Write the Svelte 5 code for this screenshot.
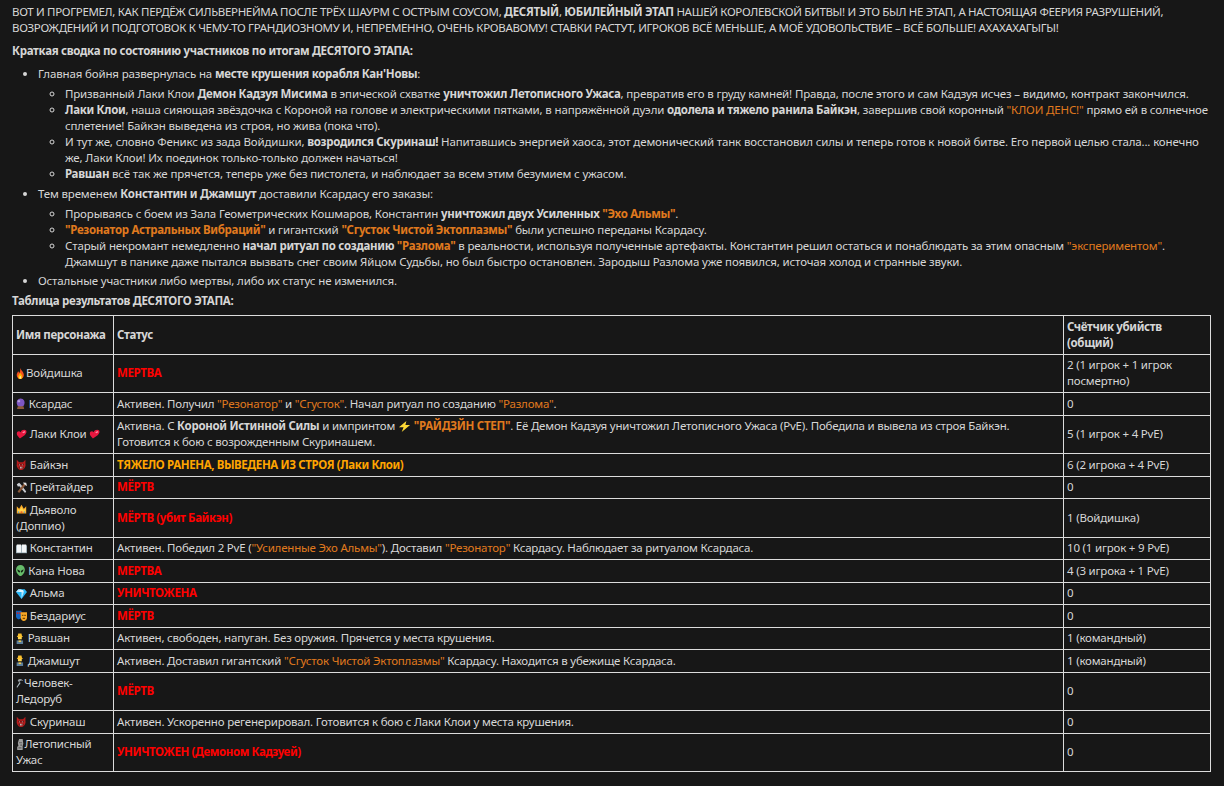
<script>
  // small hand-drawn emoji, same slots as the original text
  const paths = {
    fire: [['#f4511e', 'M6 0C7 3 11 5 11 9C11 12 9 14 6 14C3 14 1 12 1 9C1 7 2 6 3 4C4 5 4 6 5 6C6 4 6 2 6 0Z'], ['#ffb300', 'M6 6C7 8 9 9 9 11C9 13 8 14 6 14C4 14 3 13 3 11C3 9 5 8 6 6Z'], ['#ffe9a8', 'M6 10C7 11 7.500 12 7 13C6.500 14 5.500 14 5 13C4.500 12 5 11 6 10Z']],
    ball: [['#7e57c2', 'M6.500 0.500A5.500 5.500 0 1 1 6.499 0.500Z'], ['#b39ddb', 'M4 2.500A2 1.500 0 1 1 3.999 2.500Z'], ['#8d5a3a', 'M2.500 10.500H10.500L11.500 14H1.500Z']],
    heart: [['#e8173f', 'M1 6C1 3 4 2 6 4C7 1 11 0 13 2C14 4 13 6 11 8L5 12C3 10 1 8 1 6Z'], ['#ff8aa5', 'M8 4L11 2.500L12 4L9 5.500Z']],
    ogre: [['#b71c1c', 'M1 1L4 4H9L12 1L12 6C13 10 10 14 6.500 14C3 14 0 10 1 6Z'], ['#5d1010', 'M3 6H6V8H3ZM7 6H10V8H7ZM3.500 10H9.500V12H3.500Z'], ['#f5f5f5', 'M4 7H5V8H4ZM8 7H9V8H8ZM5 10H6V12H5ZM7 10H8V12H7Z']],
    tools: [['#c9ccd1', 'M1 3L4 1L6 3L13 12L11.500 14L4 5L2.500 6Z'], ['#8d5a3a', 'M11 1L13 3L4 14L2 12Z'], ['#e6e6e6', 'M9 0.500L13 1L14 5L12 4L10 2.500Z']],
    crown: [['#f9a825', 'M1 3L4 6L7 1L10 6L13 3V12H1Z'], ['#ffd54f', 'M2 5L4 8L7 4L10 8L12 5V10H2Z'], ['#e53935', 'M6 9.500H8V11H6Z'], ['#42a5f5', 'M2.500 9.500H4V11H2.500ZM10 9.500H11.500V11H10Z']],
    book: [['#90a4ae', 'M0 3H14V13H0Z'], ['#f5f7f8', 'M1 2H6.500V12H1ZM7.500 2H13V12H7.500Z']],
    alien: [['#66bb6a', 'M6.500 0C10 0 13 2.500 13 6C13 9.500 9 14 6.500 14C4 14 0 9.500 0 6C0 2.500 3 0 6.500 0Z'], ['#102010', 'M2 5.500L6 7.500L5.500 9.500C3.500 9.500 2 8 2 5.500ZM11 5.500L7 7.500L7.500 9.500C9.500 9.500 11 8 11 5.500Z']],
    gem: [['#29b6f6', 'M3 1.500H11L14 5L7 14L0 5Z'], ['#b3e5fc', 'M3 1.500H7V5H0ZM7 5H10L7 14Z'], ['#e1f5fe', 'M5 2.500H9L10 5H4Z']],
    masks: [['#1565c0', 'M0 1H7V8C7 10 5 12 3.500 12C2 12 0 10 0 8Z'], ['#c62828', 'M1 3H3V5H1ZM4 3H6V5H4Z'], ['#f9a825', 'M6 3H14V10C14 12.500 12 14 10 14C8 14 6 12.500 6 10Z'], ['#7a4a00', 'M7.500 6H9.500V7.500H7.500ZM10.500 6H12.500V7.500H10.500ZM8.500 10H11.500V11.500H8.500Z']],
    man: [['#fbc02d', 'M3.500 0.500H8.500L9.500 4H10.500V5H1.500V4H2.500Z'], ['#ffd54f', 'M3 5H9V8H3Z'], ['#5c7f9c', 'M1 9.500H11V14H1Z'], ['#f2c94c', 'M4 9.500H8V11.500H4Z']],
    pick: [['#9aa0a6', 'M3 3C6 0.500 10 1 13 4C10 3 8 3 6.500 4.500L5 5.500C4.500 4.500 3.500 4 3 3Z'], ['#b0bec5', 'M6.500 5L8 6.500L2 12.500L1 11.500Z']],
    moai: [['#9e9e9e', 'M5 0H11L12 6L11 9V14H2V10L4 9L3 5Z'], ['#5f5f5f', 'M5 4H10V5.500H5ZM7 7H10V8.500H7ZM4 10.500H9V12H4Z']],
    bolt: [['#fdd835', 'M9 0L1 8H6L4 14L13 5H8Z']]
  }

  // advance of each glyph in the source font
  const widths = { fire: 10, ball: 10, heart: 11, ogre: 11, tools: 11, crown: 11, book: 11, alien: 9.5, gem: 11, masks: 11, man: 9, pick: 8, moai: 8.5, bolt: 13 }
</script>

{#snippet em(name)}
  <svg class="em" viewBox="0 0 14 14" preserveAspectRatio="none" style="width: {widths[name]}px" aria-hidden="true">
    {#each paths[name] as [fill, d]}
      <path {fill} {d} />
    {/each}
  </svg>
{/snippet}

<main class="page">
  <p class="shout">ВОТ И ПРОГРЕМЕЛ, КАК ПЕРДЁЖ СИЛЬВЕРНЕЙМА ПОСЛЕ ТРЁХ ШАУРМ С ОСТРЫМ СОУСОМ, <b>ДЕСЯТЫЙ</b>, <b>ЮБИЛЕЙНЫЙ ЭТАП</b> НАШЕЙ КОРОЛЕВСКОЙ БИТВЫ! И ЭТО БЫЛ НЕ ЭТАП, А НАСТОЯЩАЯ ФЕЕРИЯ РАЗРУШЕНИЙ, ВОЗРОЖДЕНИЙ И ПОДГОТОВОК К ЧЕМУ-ТО ГРАНДИОЗНОМУ И, НЕПРЕМЕННО, ОЧЕНЬ КРОВАВОМУ! СТАВКИ РАСТУТ, ИГРОКОВ ВСЁ МЕНЬШЕ, А МОЁ УДОВОЛЬСТВИЕ – ВСЁ БОЛЬШЕ! АХАХАХАГЫГЫ!</p>

  <p><b>Краткая сводка по состоянию участников по итогам ДЕСЯТОГО ЭТАПА:</b></p>

  <ul class="outer">
    <li>
      <span class="lead">Главная бойня развернулась на <b>месте крушения корабля Кан'Новы</b>:</span>
      <ul class="inner">
        <li>Призванный Лаки Клои <b>Демон Кадзуя Мисима</b> в эпической схватке <b>уничтожил Летописного Ужаса</b>, превратив его в груду камней! Правда, после этого и сам Кадзуя исчез – видимо, контракт закончился.</li>
        <li><b>Лаки Клои</b>, наша сияющая звёздочка с Короной на голове и электрическими пятками, в напряжённой дуэли <b>одолела и тяжело ранила Байкэн</b>, завершив свой коронный <span class="q">"КЛОИ ДЕНС!"</span> прямо ей в солнечное сплетение! Байкэн выведена из строя, но жива (пока что).</li>
        <li>И тут же, словно Феникс из зада Войдишки, <b>возродился Скуринаш!</b> Напитавшись энергией хаоса, этот демонический танк восстановил силы и теперь готов к новой битве. Его первой целью стала... конечно же, Лаки Клои! Их поединок только-только должен начаться!</li>
        <li><b>Равшан</b> всё так же прячется, теперь уже без пистолета, и наблюдает за всем этим безумием с ужасом.</li>
      </ul>
    </li>
    <li>
      <span class="lead">Тем временем <b>Константин и Джамшут</b> доставили Ксардасу его заказы:</span>
      <ul class="inner">
        <li>Прорываясь с боем из Зала Геометрических Кошмаров, Константин <b>уничтожил двух Усиленных <span class="q">"Эхо Альмы"</span></b>.</li>
        <li><b><span class="q">"Резонатор Астральных Вибраций"</span></b> и гигантский <b><span class="q">"Сгусток Чистой Эктоплазмы"</span></b> были успешно переданы Ксардасу.</li>
        <li>Старый некромант немедленно <b>начал ритуал по созданию <span class="q">"Разлома"</span></b> в реальности, используя полученные артефакты. Константин решил остаться и понаблюдать за этим опасным <span class="q">"экспериментом"</span>. Джамшут в панике даже пытался вызвать снег своим Яйцом Судьбы, но был быстро остановлен. Зародыш Разлома уже появился, источая холод и странные звуки.</li>
      </ul>
    </li>
    <li>Остальные участники либо мертвы, либо их статус не изменился.</li>
  </ul>

  <p class="caption"><b>Таблица результатов ДЕСЯТОГО ЭТАПА:</b></p>

  <table>
    <thead>
      <tr>
        <th class="c-name">Имя персонажа</th>
        <th>Статус</th>
        <th class="c-kills">Счётчик убийств (общий)</th>
      </tr>
    </thead>
    <tbody>
      <tr>
        <td>{@render em('fire')}Войдишка</td>
        <td><b class="dead">МЕРТВА</b></td>
        <td>2 (1 игрок + 1 игрок посмертно)</td>
      </tr>
      <tr>
        <td>{@render em('ball')} Ксардас</td>
        <td>Активен. Получил <span class="q">"Резонатор"</span> и <span class="q">"Сгусток"</span>. Начал ритуал по созданию <span class="q">"Разлома"</span>.</td>
        <td>0</td>
      </tr>
      <tr>
        <td>{@render em('heart')} Лаки Клои {@render em('heart')}</td>
        <td>Активна. С <b>Короной Истинной Силы</b> и импринтом {@render em('bolt')} <b class="q">"РАЙДЗЙН СТЕП"</b>. Её Демон Кадзуя уничтожил Летописного Ужаса (PvE). Победила и вывела из строя Байкэн. Готовится к бою с возрожденным Скуринашем.</td>
        <td>5 (1 игрок + 4 PvE)</td>
      </tr>
      <tr>
        <td>{@render em('ogre')} Байкэн</td>
        <td><b class="hurt">ТЯЖЕЛО РАНЕНА, ВЫВЕДЕНА ИЗ СТРОЯ (Лаки Клои)</b></td>
        <td>6 (2 игрока + 4 PvE)</td>
      </tr>
      <tr>
        <td>{@render em('tools')} Грейтайдер</td>
        <td><b class="dead">МЁРТВ</b></td>
        <td>0</td>
      </tr>
      <tr>
        <td>{@render em('crown')} Дьяволо (Доппио)</td>
        <td><b class="dead">МЁРТВ (убит Байкэн)</b></td>
        <td>1 (Войдишка)</td>
      </tr>
      <tr>
        <td>{@render em('book')} Константин</td>
        <td>Активен. Победил 2 PvE (<span class="q">"Усиленные Эхо Альмы"</span>). Доставил <span class="q">"Резонатор"</span> Ксардасу. Наблюдает за ритуалом Ксардаса.</td>
        <td>10 (1 игрок + 9 PvE)</td>
      </tr>
      <tr>
        <td>{@render em('alien')} Кана Нова</td>
        <td><b class="dead">МЕРТВА</b></td>
        <td>4 (3 игрока + 1 PvE)</td>
      </tr>
      <tr>
        <td>{@render em('gem')} Альма</td>
        <td><b class="dead">УНИЧТОЖЕНА</b></td>
        <td>0</td>
      </tr>
      <tr>
        <td>{@render em('masks')} Бездариус</td>
        <td><b class="dead">МЁРТВ</b></td>
        <td>0</td>
      </tr>
      <tr>
        <td>{@render em('man')} Равшан</td>
        <td>Активен, свободен, напуган. Без оружия. Прячется у места крушения.</td>
        <td>1 (командный)</td>
      </tr>
      <tr>
        <td>{@render em('man')} Джамшут</td>
        <td>Активен. Доставил гигантский <span class="q">"Сгусток Чистой Эктоплазмы"</span> Ксардасу. Находится в убежище Ксардаса.</td>
        <td>1 (командный)</td>
      </tr>
      <tr>
        <td>{@render em('pick')}Человек-Ледоруб</td>
        <td><b class="dead">МЁРТВ</b></td>
        <td>0</td>
      </tr>
      <tr>
        <td>{@render em('ogre')} Скуринаш</td>
        <td>Активен. Ускоренно регенерировал. Готовится к бою с Лаки Клои у места крушения.</td>
        <td>0</td>
      </tr>
      <tr>
        <td>{@render em('moai')}Летописный Ужас</td>
        <td><b class="dead">УНИЧТОЖЕН (Демоном Кадзуей)</b></td>
        <td>0</td>
      </tr>
    </tbody>
  </table>
</main>

<style>
  :global(body) {
    background: #171717;
  }

  .page {
    padding: 4px 13px 0 12px;
    font-family: "Noto Sans", "Open Sans", sans-serif;
    font-size: 11.5px;
    line-height: 16px;
    letter-spacing: -0.15px;
    color: #d6d6d6;
  }

  p {
    margin: 0 0 7px;
  }

  .shout {
    letter-spacing: -0.33px;
  }

  b {
    font-weight: 700;
    letter-spacing: -0.3px;
  }

  .outer,
  .inner {
    margin: 0;
    padding: 0;
  }

  .outer {
    list-style: disc;
    padding-left: 26px;
    margin-top: 6px;
  }

  .outer > li {
    margin-bottom: 3.5px;
  }

  .inner {
    list-style: circle;
    padding-left: 27px;
    margin-top: 4px;
  }

  .caption {
    margin: 4px 0 6px;
  }

  .q {
    color: #e07a1e;
  }

  .dead {
    color: #ff0000;
    letter-spacing: -0.4px;
  }

  .hurt {
    color: #ffa500;
    letter-spacing: -0.4px;
  }

  table {
    width: 1199px;
    border-collapse: collapse;
    table-layout: fixed;
  }

  th,
  td {
    border: 1px solid #dcdcdc;
    padding: 2.75px 3px;
    text-align: left;
    vertical-align: middle;
    letter-spacing: -0.2px;
  }

  th {
    letter-spacing: -0.35px;
  }

  .c-name {
    width: 94px;
  }

  .c-kills {
    width: 140px;
  }

  .em {
    display: inline-block;
    height: 11px;
    vertical-align: -1.5px;
  }
</style>
